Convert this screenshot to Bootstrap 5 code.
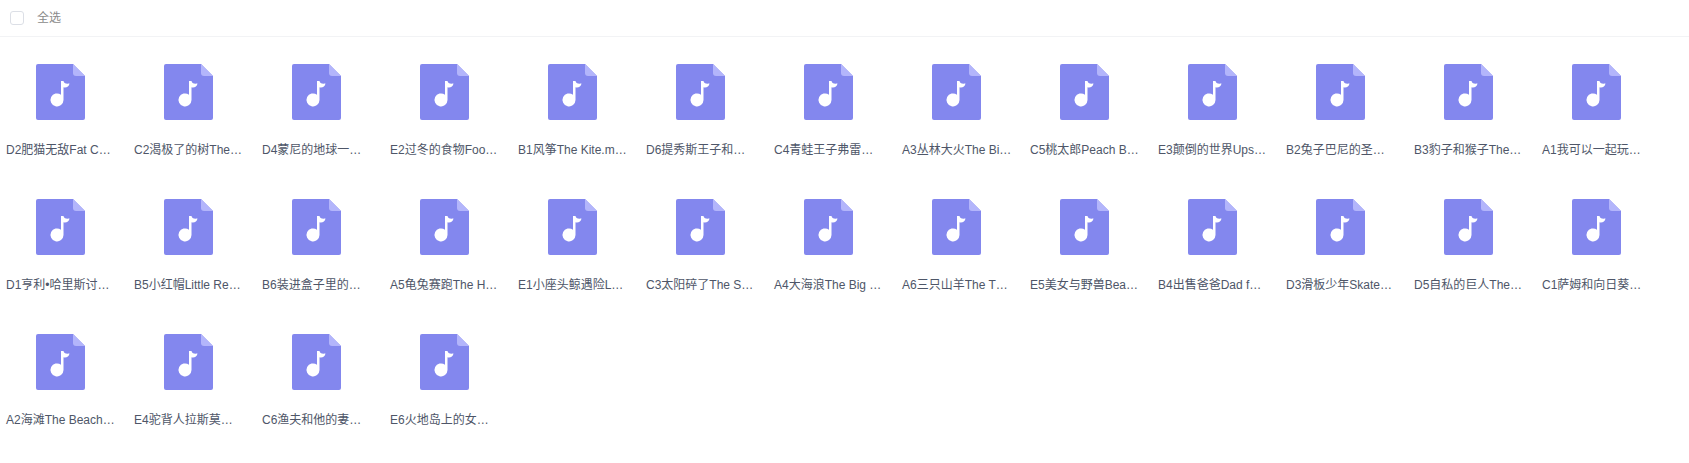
<!DOCTYPE html>
<html lang="zh">
<head>
    <meta charset="UTF-8">
    <title>全选</title>
    <link href="https://cdn.jsdelivr.net/npm/bootstrap@5.3.2/dist/css/bootstrap.min.css" rel="stylesheet">
    <style>
        body { font-family: "Liberation Sans", "Noto Sans CJK SC", sans-serif; font-size: 12px; background: #fff; overflow: hidden; }
        .select-bar { height: 37px; padding-left: 10px; border-bottom: 1px solid #f2f3f5; color: #8a8a8a; }
        .select-box { width: 14px; height: 14px; margin: 0 13px 0 0; border: 1px solid #dcdfe6; border-radius: 2px; }
        .file-list { display: grid; grid-template-columns: repeat(13, 128px); grid-auto-rows: 135px; padding: 27px 0 0 6px; }
        .file-cell { width: 110px; }
        .file-icon { display: block; width: 49px; height: 56px; margin: 0 0 20px 30px; }
        .file-name { color: #4e5668; line-height: 20px; white-space: nowrap; }
    </style>
</head>
<body>
<svg width="0" height="0" class="position-absolute">
    <symbol id="music-file" viewBox="0 0 49 56">
        <path d="M2 0H37L49 12V54a2 2 0 0 1-2 2H2a2 2 0 0 1-2-2V2a2 2 0 0 1 2-2z" fill="#8387ee"/>
        <path d="M37 0L49 12H40a3 3 0 0 1-3-3z" fill="#b3b5fb"/>
        <path d="M25 17h2.500c.3 2 2 3 6 2.500-.5 3-3 4.500-6 3.800V36a6.500 6.500 0 1 1-2.500-5.200z" fill="#fff"/>
    </symbol>
</svg>
<div class="select-bar d-flex align-items-center">
    <input class="select-box form-check-input" type="checkbox" id="selectAll">
    <label for="selectAll">全选</label>
</div>
<div class="file-list" id="fileList"></div>
<script>
const names = [
    'D2肥猫无敌Fat C…', 'C2渴极了的树The…', 'D4蒙尼的地球一…', 'E2过冬的食物Foo…', 'B1风筝The Kite.m…', 'D6提秀斯王子和…', 'C4青蛙王子弗雷…', 'A3丛林大火The Bi…', 'C5桃太郎Peach B…', 'E3颠倒的世界Ups…', 'B2兔子巴尼的圣…', 'B3豹子和猴子The…', 'A1我可以一起玩…',
    'D1亨利•哈里斯讨…', 'B5小红帽Little Re…', 'B6装进盒子里的…', 'A5龟兔赛跑The H…', 'E1小座头鲸遇险L…', 'C3太阳碎了The S…', 'A4大海浪The Big …', 'A6三只山羊The T…', 'E5美女与野兽Bea…', 'B4出售爸爸Dad f…', 'D3滑板少年Skate…', 'D5自私的巨人The…', 'C1萨姆和向日葵…',
    'A2海滩The Beach…', 'E4驼背人拉斯莫…', 'C6渔夫和他的妻…', 'E6火地岛上的女…'
];
const fileList = document.getElementById('fileList');
names.forEach(name => {
    const cell = document.createElement('div');
    cell.className = 'file-cell';
    cell.innerHTML = `
        <svg class="file-icon"><use href="#music-file"/></svg>
        <div class="file-name">${name}</div>
    `;
    fileList.appendChild(cell);
});
</script>
<script src="https://cdn.jsdelivr.net/npm/bootstrap@5.3.2/dist/js/bootstrap.bundle.min.js"></script>
</body>
</html>
